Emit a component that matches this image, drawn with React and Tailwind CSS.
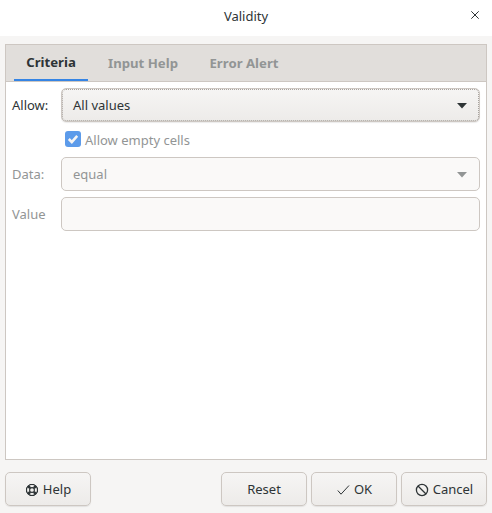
import React from 'react';

const HelpIcon = () => (
    <svg width="14" height="14" viewBox="0 0 14 14" className="shrink-0">
        <circle cx="7" cy="7" r="5.5" fill="none" stroke="#2e3436" strokeWidth="1.1" />
        <circle cx="7" cy="7" r="2.4" fill="none" stroke="#2e3436" strokeWidth="1.1" />
        <path d="M2.9 2.9L5.2 5.2M11.1 2.9L8.8 5.2M2.9 11.1L5.2 8.8M11.1 11.1L8.8 8.8" stroke="#2e3436" strokeWidth="2.6" />
        <path d="M4.6 1.5H9.4M4.6 12.5H9.4M1.5 4.6V9.4M12.5 4.6V9.4" stroke="#2e3436" strokeWidth="1" />
    </svg>
);

const OkIcon = () => (
    <svg width="14" height="14" viewBox="0 0 14 14" className="shrink-0">
        <path d="M1.8 7.5L5 11.2L13 2.5" fill="none" stroke="#2e3436" strokeWidth="1" />
    </svg>
);

const CancelIcon = () => (
    <svg width="14" height="14" viewBox="0 0 14 14" className="shrink-0">
        <circle cx="7" cy="7" r="5.6" fill="none" stroke="#2e3436" strokeWidth="1.3" />
        <path d="M3 3L11 11" stroke="#2e3436" strokeWidth="1.3" />
    </svg>
);

const Arrow = ({ color }) => (
    <svg width="10" height="6" viewBox="0 0 10 6" className="shrink-0">
        <path d="M0 0H10L5 5.5Z" fill={color} />
    </svg>
);

const FooterButton = ({ icon, label, className }) => (
    <button className={`flex h-[34px] w-[86px] items-center justify-center gap-1 rounded-[5px] border border-[#cdc7c2] bg-gradient-to-b from-[#f6f5f4] to-[#edebe9] pt-[2px] text-[#2e3436] shadow-[0_1px_1px_rgba(0,0,0,0.08)] ${className || ''}`}>
        {icon}
        <span>{label}</span>
    </button>
);

const App = () => {
    return (
        <div className="flex h-[513px] w-[492px] flex-col overflow-hidden bg-[#f6f5f4] text-[13px] font-['Noto_Sans',sans-serif] text-[#2e3436]">
            <div className="relative flex h-9 shrink-0 items-center justify-center bg-white pb-[2px]">
                <span>Validity</span>
                <svg width="8" height="8" viewBox="0 0 8 8" className="absolute right-[13px] top-[11px]">
                    <path d="M0.3 0.3L7.7 7.7M7.7 0.3L0.3 7.7" stroke="#2e3436" strokeWidth="1" />
                </svg>
            </div>

            <div className="mx-[5px] mt-2 flex h-[416px] w-[482px] flex-col border border-[#cdc7c2] bg-white">
                <div className="flex h-[37px] shrink-0 border-b border-[#cdc7c2] bg-[#e1dedb] pl-2 text-[13.2px] font-bold">
                    <div className="flex h-[36px] w-[74px] items-center justify-center border-b-2 border-[#3584e4] pt-[2px]">Criteria</div>
                    <div className="ml-[10px] flex h-[36px] w-[90px] items-center justify-center pt-[2px] text-[#929595]">Input Help</div>
                    <div className="ml-[12px] flex h-[36px] w-[88px] items-center justify-center pt-[2px] text-[#929595]">Error Alert</div>
                </div>

                <div className="flex flex-col px-[6px] pt-[6px]">
                    <div className="flex h-[34px] items-center">
                        <span className="w-[49px] pt-[2px]">Allow:</span>
                        <div className="flex h-[34px] w-[419px] items-center justify-between rounded-[5px] border border-[#cdc7c2] bg-gradient-to-b from-[#f6f5f4] to-[#edebe9] pl-[11px] pr-[12px] pt-[2px] shadow-[0_1px_1px_rgba(0,0,0,0.08)] outline-1 -outline-offset-2 outline-dotted outline-[#a8a39e]">
                            <span>All values</span>
                            <Arrow color="#2e3436" />
                        </div>
                    </div>

                    <div className="mt-[9px] ml-[53px] flex h-4 items-center gap-[4px] text-[#929595]">
                        <div className="flex h-4 w-4 items-center justify-center rounded-[3px] bg-[#5c9bea]">
                            <svg width="12" height="12" viewBox="0 0 12 12">
                                <path d="M1.8 6L4.8 9L10.2 2.8" fill="none" stroke="#f6f5f4" strokeWidth="2.6" />
                            </svg>
                        </div>
                        <span className="pt-[4px]">Allow empty cells</span>
                    </div>

                    <div className="mt-[10px] flex h-[34px] items-center text-[#929595]">
                        <span className="w-[49px] pt-[2px]">Data:</span>
                        <div className="flex h-[34px] w-[419px] items-center justify-between rounded-[5px] border border-[#cdc7c2] bg-[#faf9f8] pl-[11px] pr-[12px] pt-[2px]">
                            <span>equal</span>
                            <Arrow color="#929595" />
                        </div>
                    </div>

                    <div className="mt-[6px] flex h-[34px] items-center text-[#929595]">
                        <span className="w-[49px] pt-[2px]">Value</span>
                        <div className="h-[34px] w-[419px] rounded-[5px] border border-[#cdc7c2] bg-[#faf9f8]" />
                    </div>
                </div>
            </div>

            <div className="mx-[5px] mt-3 flex w-[482px] gap-1">
                <FooterButton icon={<HelpIcon />} label="Help" className="mr-auto" />
                <FooterButton label="Reset" />
                <FooterButton icon={<OkIcon />} label="OK" />
                <FooterButton icon={<CancelIcon />} label="Cancel" />
            </div>
        </div>
    );
};

export default App;
